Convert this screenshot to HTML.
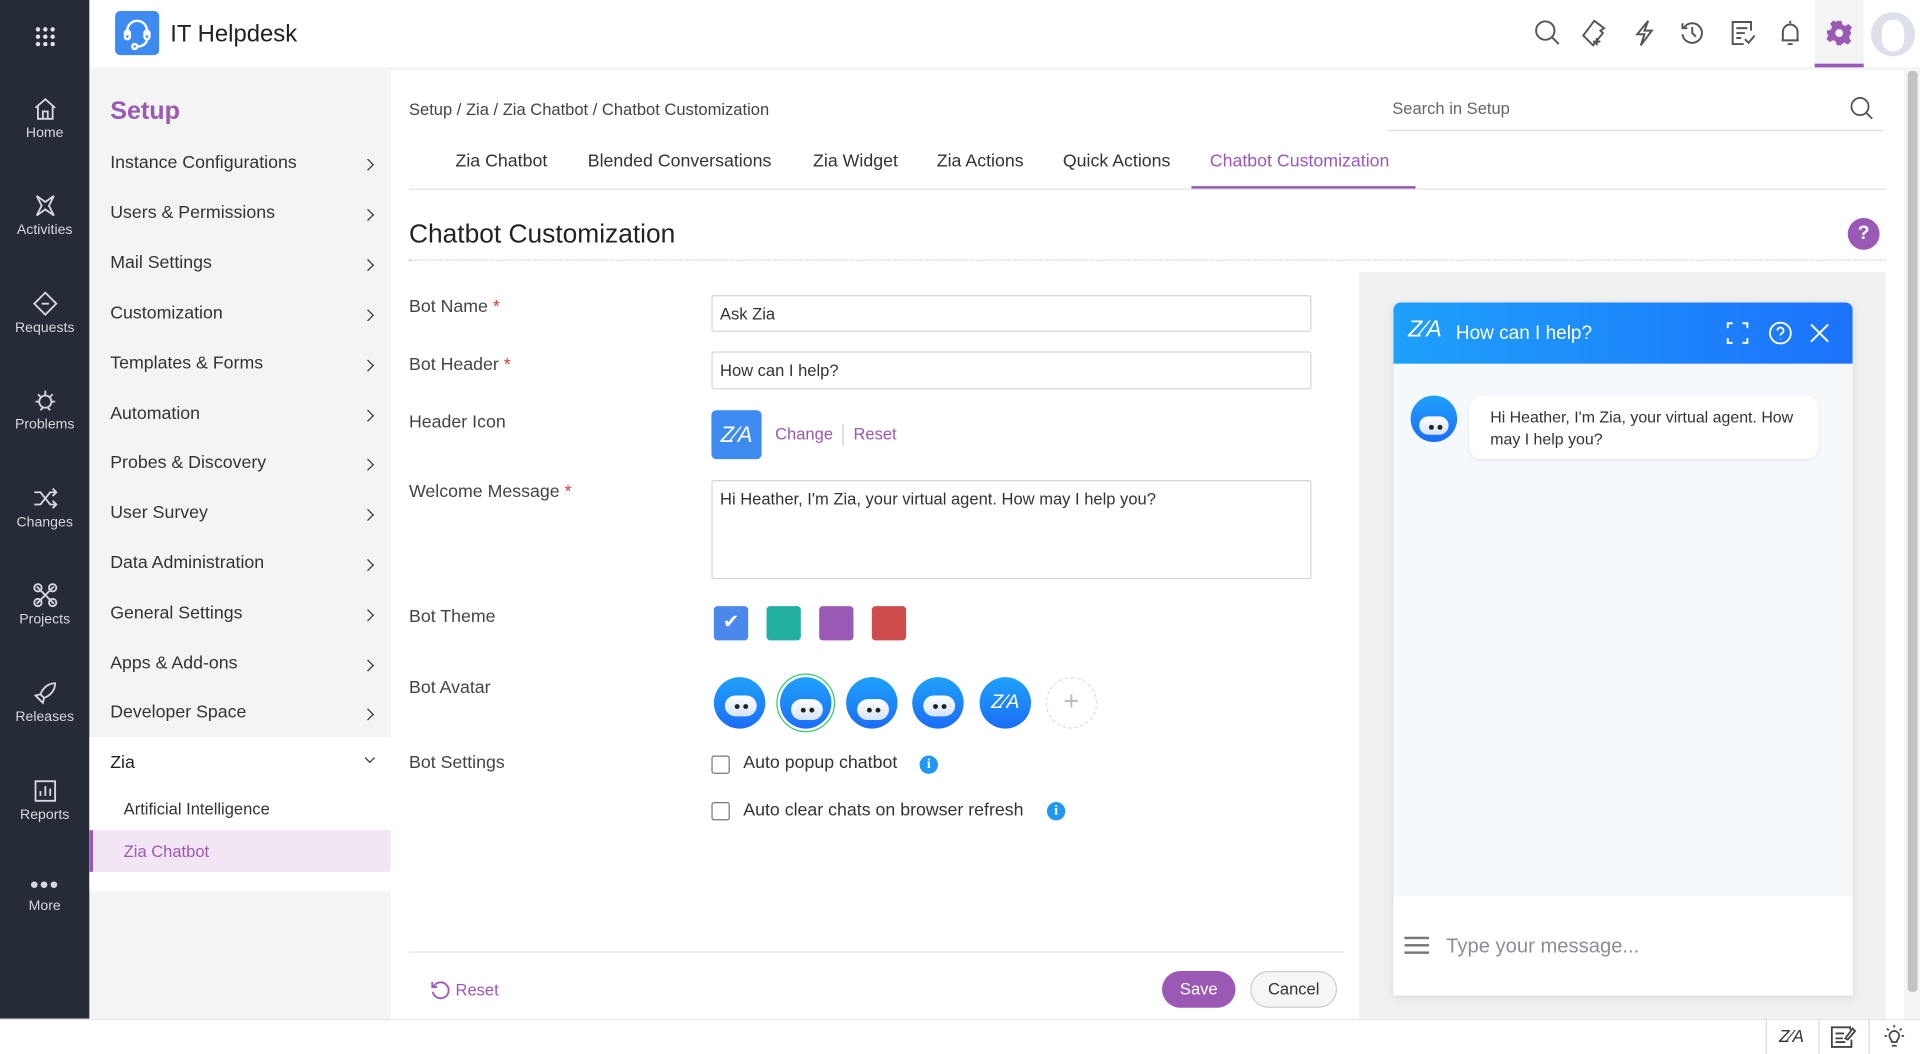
<!DOCTYPE html>
<html><head><meta charset="utf-8"><style>
*{box-sizing:border-box;margin:0;padding:0}
html,body{width:1920px;height:1054px;overflow:hidden;background:#fff}
#w{position:absolute;left:0;top:0;width:1568px;height:861px;transform:scale(1.22449);transform-origin:0 0;font-family:"Liberation Sans",sans-serif;color:#333}
.a{position:absolute}
.nav{left:0;top:0;width:73px;height:832px;background:#252c37}
.ni{position:absolute;left:0;width:73px;text-align:center;color:#d5d8dd;font-size:11.5px}
.ni svg{display:block;margin:0 auto 3px}
.top{left:73px;top:0;width:1495px;height:55px;background:#fff;box-shadow:0 1px 3px rgba(0,0,0,.12)}
.side{left:73px;top:55px;width:246px;height:777px;background:#f4f4f4}
.si{position:absolute;left:17px;font-size:14.5px;color:#333;width:220px}
.si:after{content:"";position:absolute;right:6px;top:6px;width:6px;height:6px;border-right:1.6px solid #333;border-top:1.6px solid #333;transform:rotate(45deg)}
.lbl{position:absolute;left:334px;font-size:14.5px;color:#444}
.req{color:#e53935}
.inp{position:absolute;left:581px;width:490px;border:1px solid #d6d6d6;border-radius:2px;font-size:13.5px;padding:7px 6px;color:#333;background:#fff}
.tab{position:absolute;top:124px;font-size:14.5px;color:#333}
.sw{position:absolute;top:495px;width:28px;height:28px;border-radius:3px}
.av{position:absolute;top:553px;width:42px;height:42px;border-radius:50%;background:linear-gradient(#1ea2fb,#1c6df5);overflow:hidden}
.face{position:absolute;left:9px;top:15px;width:26px;height:17px;border-radius:9px;background:linear-gradient(#fff,#d5e3f7)}
.face:before,.face:after{content:"";position:absolute;top:7px;width:4px;height:4px;border-radius:50%;background:#222}
.face:before{left:8px}.face:after{left:15px}
.cb{position:absolute;left:581px;width:15px;height:15px;border:1.3px solid #777;border-radius:2px;background:#fff}
.info{position:absolute;width:15px;height:15px;border-radius:50%;background:#2196f3;color:#fff;font-size:11px;font-weight:bold;text-align:center;line-height:15px;font-family:"Liberation Serif",serif}
.ti{position:absolute;top:15px}
</style></head><body><div id="w">

<div class="a nav"></div>
<svg class="a" style="left:28px;top:21px" width="18" height="18" viewBox="0 0 18 18" fill="#dfe3e8"><circle cx="3" cy="3" r="1.8"/><circle cx="9" cy="3" r="1.8"/><circle cx="15" cy="3" r="1.8"/><circle cx="3" cy="9" r="1.8"/><circle cx="9" cy="9" r="1.8"/><circle cx="15" cy="9" r="1.8"/><circle cx="3" cy="15" r="1.8"/><circle cx="9" cy="15" r="1.8"/><circle cx="15" cy="15" r="1.8"/></svg>
<div class="ni" style="top:78px"><svg width="22" height="22" viewBox="0 0 22 22" fill="none" stroke="#d5d8dd" stroke-width="1.5"><path d="M3 10L11 3l8 7M5 9v10h12V9M9 19v-6h4v6"/></svg>Home</div>
<div class="ni" style="top:157px"><svg width="22" height="22" viewBox="0 0 22 22" fill="none" stroke="#d5d8dd" stroke-width="1.5"><path d="M4 3l7 5 7-5-4 8 4 8-7-5-7 5 4-8z"/></svg>Activities</div>
<div class="ni" style="top:237px"><svg width="22" height="22" viewBox="0 0 22 22" fill="none" stroke="#d5d8dd" stroke-width="1.5"><path d="M11 2l9 9-9 9-9-9z M8 11h6"/></svg>Requests</div>
<div class="ni" style="top:316px"><svg width="22" height="22" viewBox="0 0 22 22" fill="none" stroke="#d5d8dd" stroke-width="1.5"><circle cx="11" cy="12" r="5"/><path d="M11 3v4M3 12h3M16 12h3M5 6l2 2M17 6l-2 2M7 19l2-2M15 19l-2-2"/></svg>Problems</div>
<div class="ni" style="top:396px"><svg width="22" height="22" viewBox="0 0 22 22" fill="none" stroke="#d5d8dd" stroke-width="1.5"><path d="M2 6h5l8 10h5M2 16h5l8-10h5M17 3l3 3-3 3M17 13l3 3-3 3"/></svg>Changes</div>
<div class="ni" style="top:475px"><svg width="22" height="22" viewBox="0 0 22 22" fill="none" stroke="#d5d8dd" stroke-width="1.5"><path d="M4 4l14 14M18 4L4 18"/><circle cx="5" cy="5" r="3"/><circle cx="17" cy="5" r="3"/><circle cx="5" cy="17" r="3"/><circle cx="17" cy="17" r="3"/></svg>Projects</div>
<div class="ni" style="top:555px"><svg width="22" height="22" viewBox="0 0 22 22" fill="none" stroke="#d5d8dd" stroke-width="1.5"><path d="M19 3c-6 0-10 4-12 9l3 3c5-2 9-6 9-12zM7 12l-4 1 3 3M10 15l-1 4-3-3"/></svg>Releases</div>
<div class="ni" style="top:635px"><svg width="22" height="22" viewBox="0 0 22 22" fill="none" stroke="#d5d8dd" stroke-width="1.5"><rect x="3" y="3" width="16" height="16"/><path d="M7 15v-4M11 15V7M15 15v-6"/></svg>Reports</div>
<div class="ni" style="top:716px"><div style="font-size:20px;line-height:14px;letter-spacing:1px">•••</div><div style="margin-top:4px">More</div></div>

<div class="a top"></div>
<div class="a" style="left:94px;top:9px;width:36px;height:36px;border-radius:4px;background:#3d8bf0"></div>
<svg class="a" style="left:94px;top:9px" width="36" height="36" viewBox="0 0 36 36" fill="none" stroke="#fff" stroke-width="2"><path d="M10 20v-4a8 8 0 0 1 16 0v4"/><rect x="8" y="16" width="4" height="7" rx="2"/><rect x="24" y="16" width="4" height="7" rx="2"/><path d="M26 23c0 4-4 6-8 6"/><circle cx="16" cy="29" r="2"/></svg>
<div class="a" style="left:139px;top:17px;font-size:19.5px;color:#222">IT Helpdesk</div>
<svg class="ti" style="left:1252px" width="22" height="24" viewBox="0 0 22 24" fill="none" stroke="#555" stroke-width="1.6"><circle cx="10" cy="10" r="7.5"/><path d="M15.5 15.5L21 21"/></svg>
<svg class="ti" style="left:1291px" width="22" height="24" viewBox="0 0 22 24" fill="none" stroke="#555" stroke-width="1.6"><path d="M11 2l8 6-3 2 2 2-8 10-8-8 9-12zM13 16v6M10 19h6"/></svg>
<svg class="ti" style="left:1332px" width="22" height="24" viewBox="0 0 22 24" fill="none" stroke="#555" stroke-width="1.6"><path d="M14 2L5 13h6l-3 9 9-12h-6z"/></svg>
<svg class="ti" style="left:1371px" width="22" height="24" viewBox="0 0 22 24" fill="none" stroke="#555" stroke-width="1.6"><path d="M4 8a8 8 0 1 1-1 5M3 4v4h4M11 7v5l3 3"/></svg>
<svg class="ti" style="left:1412px" width="22" height="24" viewBox="0 0 22 24" fill="none" stroke="#555" stroke-width="1.6"><path d="M18 10V3H3v18h9M6 8h9M6 12h7M6 16h4M13 17l3 3 5-6"/></svg>
<svg class="ti" style="left:1451px" width="22" height="24" viewBox="0 0 22 24" fill="none" stroke="#555" stroke-width="1.6"><path d="M11 2v2M5 18V11a6 6 0 0 1 12 0v7H4h14M9 21h4"/></svg>
<div class="a" style="left:1482px;top:0;width:40px;height:55px;background:#f4f4f4;border-bottom:3px solid #9b59b6"></div>
<svg class="a" style="left:1491px;top:16px" width="22" height="22" viewBox="0 0 22 22"><path fill="#9b59b6" d="M9 1h4l.6 3 2.4 1.2 2.6-1.6 2.8 2.8-1.6 2.6L21 11.4l-1.2 1-.6 2.6 1.6 2.6-2.8 2.8-2.6-1.6-2.4 1.2L13 21H9l-.6-3-2.4-1.2-2.6 1.6-2.8-2.8 1.6-2.6L1 11.4V9l3-.6 1.2-2.4-1.6-2.6 2.8-2.8L9 2.2z"/><circle cx="11" cy="11" r="3.2" fill="#f4f4f4"/></svg>
<div class="a" style="left:1528px;top:10px;width:36px;height:36px;border-radius:50%;background:#dde0ea;overflow:hidden"><div class="a" style="left:9px;top:6px;width:18px;height:26px;border-radius:9px;background:#fff"></div></div>

<div class="a side"></div>
<div class="a" style="left:73px;top:602px;width:246px;height:126px;background:#fff"></div>
<div class="a" style="left:90px;top:79px;font-size:20.5px;font-weight:bold;color:#9b59b6">Setup</div>
<div class="si" style="top:125px;left:90px">Instance Configurations</div>
<div class="si" style="top:166px;left:90px">Users &amp; Permissions</div>
<div class="si" style="top:207px;left:90px">Mail Settings</div>
<div class="si" style="top:248px;left:90px">Customization</div>
<div class="si" style="top:289px;left:90px">Templates &amp; Forms</div>
<div class="si" style="top:330px;left:90px">Automation</div>
<div class="si" style="top:370px;left:90px">Probes &amp; Discovery</div>
<div class="si" style="top:411px;left:90px">User Survey</div>
<div class="si" style="top:452px;left:90px">Data Administration</div>
<div class="si" style="top:493px;left:90px">General Settings</div>
<div class="si" style="top:534px;left:90px">Apps &amp; Add-ons</div>
<div class="si" style="top:574px;left:90px">Developer Space</div>
<div class="a" style="left:90px;top:615px;font-size:14.5px;color:#222">Zia</div>
<div class="a" style="left:299px;top:616px;width:6px;height:6px;border-right:1.6px solid #333;border-bottom:1.6px solid #333;transform:rotate(45deg)"></div>
<div class="a" style="left:101px;top:653px;font-size:13.5px;color:#333">Artificial Intelligence</div>
<div class="a" style="left:73px;top:678px;width:246px;height:34px;background:#f2e6f4;border-left:3px solid #9b59b6"></div>
<div class="a" style="left:101px;top:688px;font-size:13.5px;color:#9b59b6">Zia Chatbot</div>

<div class="a" style="left:1555px;top:55px;width:13px;height:777px;background:#f5f5f5"></div>
<div class="a" style="left:1558px;top:58px;width:8px;height:752px;background:#c2c2c2;border-radius:3px"></div>

<div class="a" style="left:334px;top:82px;font-size:13.5px;color:#444">Setup / Zia / Zia Chatbot / Chatbot Customization</div>
<div class="a" style="left:1137px;top:81px;font-size:13.5px;color:#666">Search in Setup</div>
<div class="a" style="left:1133px;top:106px;width:405px;height:1px;background:#ddd"></div>
<svg class="a" style="left:1510px;top:78px" width="20" height="20" viewBox="0 0 20 20" fill="none" stroke="#555" stroke-width="1.5"><circle cx="9" cy="9" r="7"/><path d="M14 14l5 5"/></svg>

<div class="tab" style="left:372px">Zia Chatbot</div>
<div class="tab" style="left:480px">Blended Conversations</div>
<div class="tab" style="left:664px">Zia Widget</div>
<div class="tab" style="left:765px">Zia Actions</div>
<div class="tab" style="left:868px">Quick Actions</div>
<div class="tab" style="left:988px;color:#9b59b6">Chatbot Customization</div>
<div class="a" style="left:334px;top:154px;width:1206px;height:1px;background:#e2e2e2"></div>
<div class="a" style="left:973px;top:152px;width:183px;height:2px;background:#9b59b6"></div>

<div class="a" style="left:334px;top:179px;font-size:21.5px;color:#222">Chatbot Customization</div>
<div class="a" style="left:334px;top:212px;width:1206px;border-top:1px dotted #ccc"></div>
<div class="a" style="left:1509px;top:178px;width:26px;height:26px;border-radius:50%;background:#9b59b6;color:#fff;font-weight:bold;font-size:16px;text-align:center;line-height:26px">?</div>

<div class="lbl" style="top:243px">Bot Name<span class="req"> *</span></div>
<div class="lbl" style="top:290px">Bot Header<span class="req"> *</span></div>
<div class="lbl" style="top:337px">Header Icon</div>
<div class="lbl" style="top:394px">Welcome Message<span class="req"> *</span></div>
<div class="lbl" style="top:496px">Bot Theme</div>
<div class="lbl" style="top:554px">Bot Avatar</div>
<div class="lbl" style="top:615px">Bot Settings</div>

<div class="inp" style="top:241px;height:30px">Ask Zia</div>
<div class="inp" style="top:287px;height:31px">How can I help?</div>
<div class="a" style="left:581px;top:335px;width:41px;height:40px;border-radius:4px;background:#3d8bf0;color:#fff;font-size:18px;text-align:center;line-height:40px;font-style:italic">Z⁄A</div>
<div class="a" style="left:633px;top:347px;font-size:13.5px;color:#9b59b6">Change</div>
<div class="a" style="left:688px;top:346px;width:1px;height:18px;background:#ccc"></div>
<div class="a" style="left:697px;top:347px;font-size:13.5px;color:#9b59b6">Reset</div>
<div class="inp" style="top:392px;height:81px">Hi Heather, I'm Zia, your virtual agent. How may I help you?</div>

<div class="sw" style="left:583px;background:#4a88ec;color:#fff;text-align:center;font-size:16px;line-height:28px">✔</div>
<div class="sw" style="left:626px;background:#22b0a0"></div>
<div class="sw" style="left:669px;background:#9a59b4"></div>
<div class="sw" style="left:712px;background:#cf4c4c"></div>

<div class="av" style="left:583px"><div class="face"></div></div>
<div class="a" style="left:634px;top:550px;width:48px;height:48px;border-radius:50%;border:1.3px solid #2ecc71"></div>
<div class="av" style="left:637px"><div class="face" style="top:18px"></div></div>
<div class="av" style="left:691px"><div class="face" style="top:18px"></div></div>
<div class="av" style="left:745px"><div class="face"></div></div>
<div class="av" style="left:800px;color:#fff;text-align:center;line-height:42px;font-size:16px;font-style:italic">Z⁄A</div>
<div class="a" style="left:854px;top:553px;width:42px;height:42px;border-radius:50%;border:1.5px dashed #ddd;color:#bbb;text-align:center;line-height:38px;font-size:22px">+</div>

<div class="cb" style="top:617px"></div>
<div class="a" style="left:607px;top:615px;font-size:14.5px;color:#333">Auto popup chatbot</div>
<div class="info" style="left:751px;top:617px">i</div>
<div class="cb" style="top:655px"></div>
<div class="a" style="left:607px;top:654px;font-size:14.5px;color:#333">Auto clear chats on browser refresh</div>
<div class="info" style="left:855px;top:655px">i</div>

<div class="a" style="left:334px;top:777px;width:764px;height:1px;background:#e2e2e2"></div>
<svg class="a" style="left:351px;top:800px" width="17" height="17" viewBox="0 0 17 17" fill="none" stroke="#9b59b6" stroke-width="1.5"><path d="M3 6a6.5 6.5 0 1 1-.5 4M2 2v4h4"/></svg>
<div class="a" style="left:372px;top:801px;font-size:13.5px;color:#9b59b6">Reset</div>
<div class="a" style="left:949px;top:793px;width:60px;height:30px;border-radius:15px;background:#9b59b6;color:#fff;font-size:13.5px;text-align:center;line-height:30px">Save</div>
<div class="a" style="left:1021px;top:793px;width:71px;height:30px;border-radius:15px;border:1px solid #ccc;background:#f6f6f6;color:#333;font-size:13.5px;text-align:center;line-height:28px">Cancel</div>

<div class="a" style="left:1110px;top:222px;width:430px;height:610px;background:#f1f1f1"></div>
<div class="a" style="left:1138px;top:247px;width:375px;height:566px;background:#f6f9fc;box-shadow:0 2px 8px rgba(0,0,0,.1);border-radius:6px 6px 0 0;overflow:hidden">
 <div class="a" style="left:0;top:0;width:375px;height:50px;background:linear-gradient(90deg,#1ea0fb,#1c72fb)"></div>
 <div class="a" style="left:12px;top:12px;color:#fff;font-size:19px;font-style:italic">Z⁄A</div>
 <div class="a" style="left:51px;top:17px;color:#fff;font-size:15.5px">How can I help?</div>
 <svg class="a" style="left:272px;top:16px" width="18" height="18" viewBox="0 0 18 18" fill="none" stroke="#fff" stroke-width="1.6"><path d="M1 5V1h4M13 1h4v4M17 13v4h-4M5 17H1v-4"/></svg>
 <svg class="a" style="left:306px;top:15px" width="20" height="20" viewBox="0 0 20 20" fill="none" stroke="#fff" stroke-width="1.5"><circle cx="10" cy="10" r="8.5"/><path d="M7.5 8a2.5 2.5 0 1 1 3.5 2.3c-.7.4-1 .9-1 1.7M10 14.5v.5"/></svg>
 <svg class="a" style="left:340px;top:17px" width="16" height="16" viewBox="0 0 16 16" stroke="#fff" stroke-width="1.6"><path d="M1 1l14 14M15 1L1 15"/></svg>
 <div class="av" style="left:14px;top:76px;width:38px;height:38px"><div class="face" style="left:7px;top:17px;width:24px;height:15px"></div></div>
 <div class="a" style="left:62px;top:76px;width:285px;height:52px;background:#fff;border-radius:10px;box-shadow:0 1px 3px rgba(0,0,0,.08);padding:9px 17px;font-size:13px;line-height:18px;color:#333">Hi Heather, I'm Zia, your virtual agent. How may I help you?</div>
 <div class="a" style="left:0;top:485px;width:375px;height:81px;background:#fff"></div>
 <div class="a" style="left:9px;top:518px;width:20px;height:2px;background:#777;box-shadow:0 6px 0 #777,0 12px 0 #777"></div>
 <div class="a" style="left:43px;top:517px;font-size:16.5px;color:#8a8f98">Type your message...</div>
</div>

<div class="a" style="left:0;top:832px;width:1568px;height:29px;background:#fff;border-top:1px solid #e6e6e6"></div>
<div class="a" style="left:1442px;top:832px;width:1px;height:29px;background:#ddd"></div>
<div class="a" style="left:1485px;top:832px;width:1px;height:29px;background:#ddd"></div>
<div class="a" style="left:1526px;top:832px;width:1px;height:29px;background:#ddd"></div>
<div class="a" style="left:1453px;top:838px;font-size:14px;font-style:italic;color:#333">Z⁄A</div>
<svg class="a" style="left:1495px;top:837px" width="22" height="19" viewBox="0 0 22 19" fill="none" stroke="#444" stroke-width="1.5"><path d="M16 4V2H1v16h16v-6M4 7h7M4 11h6M4 14h8M12 11l6-8 2 2-6 7z"/></svg>
<svg class="a" style="left:1536px;top:835px" width="22" height="22" viewBox="0 0 22 22" fill="none" stroke="#444" stroke-width="1.4"><path d="M7 11a4 4 0 1 1 8 0c0 2-2 3-2 5H9c0-2-2-3-2-5zM9 19h4M11 2v2M3 11h2M17 11h2M5 5l1.5 1.5M17 5l-1.5 1.5"/></svg>
</div></body></html>
